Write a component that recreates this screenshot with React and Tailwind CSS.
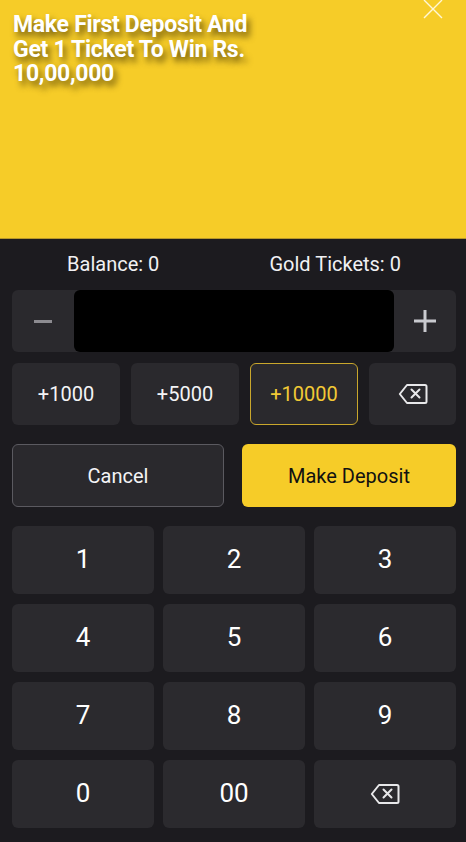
import React from "react";

function BackspaceIcon() {
  return (
    <svg width="30" height="22" viewBox="0 0 30 22" fill="none">
      <path
        d="M9 2 H27 a1.5 1.5 0 0 1 1.5 1.5 V18.5 a1.5 1.5 0 0 1 -1.5 1.5 H9 L1.8 11 Z"
        stroke="#e8e8ea"
        strokeWidth="2"
        strokeLinejoin="round"
      />
      <path d="M13.5 6.5 L21.5 14.5 M21.5 6.5 L13.5 14.5" stroke="#e8e8ea" strokeWidth="2" strokeLinecap="round" />
    </svg>
  );
}

export default function App() {
  const font = { fontFamily: "Roboto, 'Noto Sans', sans-serif" };
  const keys = ["1", "2", "3", "4", "5", "6", "7", "8", "9", "0", "00"];
  return (
    <div className="w-[466px] h-[842px] bg-[#1c1b1f] overflow-hidden flex flex-col" style={font}>
      <div className="relative h-[239px] bg-[#f6cc28] border-b border-[#b8982a] shrink-0">
        <div className="pl-[13px] pt-[13px] text-white font-bold text-[23px] leading-[24.5px] tracking-[-0.3px] [text-shadow:3px_5px_6px_rgba(60,45,0,0.75)]">
          Make First Deposit And
          <br />
          Get 1 Ticket To Win Rs.
          <br />
          10,00,000
        </div>
        <svg className="absolute left-[422px] top-[-2px]" width="22" height="22" viewBox="0 0 22 22">
          <path d="M2 2 L20 20 M20 2 L2 20" stroke="#fff7d6" strokeWidth="1.4" />
        </svg>
      </div>

      <div className="flex justify-around ml-3 mr-[10px] pt-[12px] text-[20px] leading-[26px] text-[#f1f1f3]">
        <span>Balance: 0</span>
        <span>Gold Tickets: 0</span>
      </div>

      <div className="ml-3 mr-[10px] mt-[13px] h-[62px] flex rounded-md overflow-hidden bg-[#2a292d]">
        <button className="w-[62px] flex items-center justify-center">
          <span className="block w-[18px] h-[3px] bg-[#8c8b90]" />
        </button>
        <div className="flex-1 bg-black rounded-md" />
        <button className="w-[62px] flex items-center justify-center">
          <svg width="24" height="24" viewBox="0 0 24 24">
            <path d="M12 1 V23 M1 12 H23" stroke="#c9cacf" strokeWidth="3" />
          </svg>
        </button>
      </div>

      <div className="ml-3 mr-[10px] mt-[11px] h-[62px] grid grid-cols-[108px_108px_108px_1fr] gap-[11px] text-[20px]">
        <button className="rounded-md bg-[#2a292d] text-[#f4f4f6]">+1000</button>
        <button className="rounded-md bg-[#2a292d] text-[#f4f4f6]">+5000</button>
        <button className="rounded-md bg-[#2a292d] text-[#f2c935] border border-[#c9a72c]">+10000</button>
        <button className="rounded-md bg-[#2a292d] flex items-center justify-center">
          <BackspaceIcon />
        </button>
      </div>

      <div className="ml-3 mr-[10px] mt-[19px] h-[63px] flex gap-[18px] text-[20px]">
        <button className="w-[212px] rounded-md bg-[#2a292d] border border-[#5b5a60] text-[#f4f4f6]">Cancel</button>
        <button className="flex-1 rounded-md bg-[#f6cc28] text-[#111]">Make Deposit</button>
      </div>

      <div className="ml-3 mr-[10px] mt-[19px] grid grid-cols-3 grid-rows-[68px_68px_68px_68px] gap-x-[9px] gap-y-[10px]">
        {keys.map((k) => (
          <button key={k} className="rounded-md bg-[#2b2a2e] text-white text-[26px] pb-[2px]">
            {k}
          </button>
        ))}
        <button className="rounded-md bg-[#2b2a2e] flex items-center justify-center">
          <BackspaceIcon />
        </button>
      </div>
    </div>
  );
}
